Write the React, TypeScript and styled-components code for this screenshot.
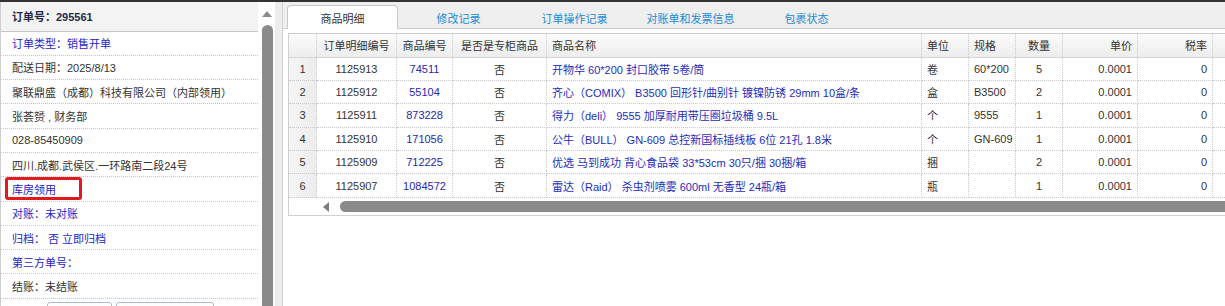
import React from 'react';
import styled, { createGlobalStyle } from 'styled-components';

const GlobalStyle = createGlobalStyle`
  html, body {
    margin: 0;
    padding: 0;
    background: #fff;
    overflow: hidden;
  }
  body {
    font-family: "Liberation Sans", "Noto Sans CJK SC", sans-serif;
    font-size: 11px;
    color: #333;
  }
  * {
    box-sizing: border-box;
  }
`;

const Page = styled.div`
  width: 1225px;
  height: 306px;
  display: flex;
  flex-direction: column;
  overflow: hidden;
`;

const TopStrip = styled.div`
  height: 2px;
  flex: none;
  background: #333;
`;

const Main = styled.div`
  flex: 1;
  display: flex;
  min-height: 0;
`;

/* left: order summary */
const Side = styled.aside`
  width: 258px;
  flex: none;
  border-left: 1px solid #cfcfcf;
  display: flex;
  flex-direction: column;
`;

const SideHead = styled.div`
  height: 29.5px;
  flex: none;
  background: #f3f3f3;
  border-bottom: 1px solid #c6c6c6;
  padding-left: 11px;
  display: flex;
  align-items: center;
  font-weight: bold;
  color: #1f2b48;
`;

const InfoRow = styled.div<{ $blue?: boolean }>`
  height: 24.3px;
  flex: none;
  border-bottom: 1px dotted #c4c4c4;
  padding-left: 11px;
  display: flex;
  align-items: center;
  white-space: pre;
  color: ${(p) => (p.$blue ? '#2424c8' : '#333')};
`;

const Marked = styled.span`
  display: inline-flex;
  align-items: center;
  width: 77px;
  height: 23px;
  margin-left: -7px;
  padding-left: 4px;
  border: 3px solid #e3191d;
  border-radius: 3px;
`;

const ButtonRow = styled.div`
  display: flex;
  gap: 4px;
  padding: 3px 0 0 46px;
`;

const SideButton = styled.button<{ $w: number }>`
  width: ${(p) => p.$w}px;
  height: 22px;
  border: 1px solid #a9bcd2;
  border-radius: 3px;
  background: linear-gradient(#ffffff, #eef2f6);
`;

const VTrack = styled.div`
  width: 17px;
  flex: none;
  display: flex;
  flex-direction: column;
  align-items: flex-start;
  padding: 9px 0 0 4px;
  background: #fff;
`;

const UpArrow = styled.div`
  width: 0;
  height: 0;
  border-left: 5.5px solid transparent;
  border-right: 5.5px solid transparent;
  border-bottom: 6px solid #8a8a8a;
`;

const VThumb = styled.div`
  margin-top: 8px;
  width: 11px;
  flex: 1;
  background: #8a8a8a;
  border-radius: 6px 6px 0 0;
`;

const Splitter = styled.div`
  width: 7px;
  flex: none;
  background: #ededed;
`;

/* right: tabs + grid */
const Content = styled.section`
  flex: 1;
  min-width: 0;
  border-left: 1px solid #d2d2d2;
  display: flex;
  flex-direction: column;
  overflow: hidden;
`;

const TabBar = styled.div`
  height: 27px;
  flex: none;
  background: #efefef;
  border-bottom: 1px solid #cdcdcd;
  display: flex;
  align-items: flex-end;
  gap: 5px;
  padding-left: 4px;
`;

const Tab = styled.div<{ $active?: boolean }>`
  width: 111px;
  height: 24px;
  margin-bottom: -1px;
  display: flex;
  align-items: center;
  justify-content: center;
  color: ${(p) => (p.$active ? '#333' : '#1a8ad4')};
  background: ${(p) => (p.$active ? '#fff' : 'transparent')};
  border: 1px solid ${(p) => (p.$active ? '#c9c9c9' : 'transparent')};
  border-bottom: none;
  border-radius: 4px 4px 0 0;
`;

const Body = styled.div`
  padding: 4px 0 0 5px;
`;

const GridBox = styled.div`
  width: 1010px;
  border: 1px solid #d0d0d0;
`;

const cols = '28px 80px 56px 94px 375px 47px 47px 47px 75px 75px 80px';

const HeadRow = styled.div`
  display: grid;
  grid-template-columns: ${cols};
  height: 23.5px;
  background: linear-gradient(#fbfbfb, #ededed);
  border-bottom: 1px solid #d6d6d6;
`;

const Row = styled.div`
  display: grid;
  grid-template-columns: ${cols};
  height: 23.4px;
`;

type Align = 'left' | 'center' | 'right';

const Cell = styled.div<{ $align?: Align; $color?: string; $num?: boolean }>`
  display: flex;
  align-items: center;
  justify-content: ${(p) =>
    p.$align === 'left' ? 'flex-start' : p.$align === 'right' ? 'flex-end' : 'center'};
  padding: 0 5px;
  border-right: 1px dotted #c8c8c8;
  border-bottom: 1px dotted #c8c8c8;
  overflow: hidden;
  white-space: pre;
  color: ${(p) => p.$color || '#333'};
  background: ${(p) => (p.$num ? 'linear-gradient(to right, #f6f6f6, #ececec)' : 'transparent')};
`;

const HeadCell = styled(Cell)`
  border-bottom: none;
`;

const HScroll = styled.div`
  height: 17.5px;
  display: flex;
  align-items: center;
  gap: 11px;
  padding-left: 34px;
`;

const LeftArrow = styled.div`
  width: 0;
  height: 0;
  border-top: 5px solid transparent;
  border-bottom: 5px solid transparent;
  border-right: 6px solid #7a7a7a;
`;

const HThumb = styled.div`
  flex: 1;
  height: 11px;
  background: #8a8a8a;
  border-radius: 6px 0 0 6px;
`;

const tabs = ['商品明细', '修改记录', '订单操作记录', '对账单和发票信息', '包裹状态'];

const heads: { label: string; align: Align }[] = [
  { label: '', align: 'center' },
  { label: '订单明细编号', align: 'center' },
  { label: '商品编号', align: 'center' },
  { label: '是否是专柜商品', align: 'center' },
  { label: '商品名称', align: 'left' },
  { label: '单位', align: 'left' },
  { label: '规格', align: 'left' },
  { label: '数量', align: 'center' },
  { label: '单价', align: 'right' },
  { label: '税率', align: 'right' },
  { label: '', align: 'left' },
];

const items = [
  ['1125913', '74511', '否', '开物华 60*200 封口胶带 5卷/筒', '卷', '60*200', '5'],
  ['1125912', '55104', '否', '齐心（COMIX） B3500 回形针/曲别针 镀镍防锈 29mm 10盒/条', '盒', 'B3500', '2'],
  ['1125911', '873228', '否', '得力（deli） 9555 加厚耐用带压圈垃圾桶 9.5L', '个', '9555', '1'],
  ['1125910', '171056', '否', '公牛（BULL） GN-609 总控新国标插线板 6位 21孔 1.8米', '个', 'GN-609', '1'],
  ['1125909', '712225', '否', '优选 马到成功 背心食品袋 33*53cm 30只/捆 30捆/箱', '捆', '', '2'],
  ['1125907', '1084572', '否', '雷达（Raid） 杀虫剂喷雾 600ml 无香型 24瓶/箱', '瓶', '', '1'],
];

const App = () => (
  <Page>
    <GlobalStyle />
    <TopStrip />
    <Main>
      <Side>
        <SideHead>订单号：295561</SideHead>
        <InfoRow $blue>订单类型：销售开单</InfoRow>
        <InfoRow>配送日期：2025/8/13</InfoRow>
        <InfoRow>聚联鼎盛（成都）科技有限公司（内部领用）</InfoRow>
        <InfoRow>张荟赟 , 财务部</InfoRow>
        <InfoRow>028-85450909</InfoRow>
        <InfoRow>四川.成都.武侯区.一环路南二段24号</InfoRow>
        <InfoRow $blue>
          <Marked>库房领用</Marked>
        </InfoRow>
        <InfoRow $blue>对账：未对账</InfoRow>
        <InfoRow $blue>归档： 否 立即归档</InfoRow>
        <InfoRow $blue>第三方单号：</InfoRow>
        <InfoRow>结账：未结账</InfoRow>
        <ButtonRow>
          <SideButton $w={65} />
          <SideButton $w={98} />
        </ButtonRow>
      </Side>
      <VTrack>
        <UpArrow />
        <VThumb />
      </VTrack>
      <Splitter />
      <Content>
        <TabBar>
          {tabs.map((t, i) => (
            <Tab key={t} $active={i === 0}>
              {t}
            </Tab>
          ))}
        </TabBar>
        <Body>
          <GridBox>
            <HeadRow>
              {heads.map((h, i) => (
                <HeadCell key={i} $align={h.align}>
                  {h.label}
                </HeadCell>
              ))}
            </HeadRow>
            {items.map((it, i) => (
              <Row key={it[0]}>
                <Cell $num>{i + 1}</Cell>
                <Cell>{it[0]}</Cell>
                <Cell $color="#2727b0">{it[1]}</Cell>
                <Cell>{it[2]}</Cell>
                <Cell $align="left" $color="#1d2dbb">
                  {it[3]}
                </Cell>
                <Cell $align="left">{it[4]}</Cell>
                <Cell $align="left">{it[5]}</Cell>
                <Cell>{it[6]}</Cell>
                <Cell $align="right">0.0001</Cell>
                <Cell $align="right">0</Cell>
                <Cell />
              </Row>
            ))}
            <HScroll>
              <LeftArrow />
              <HThumb />
            </HScroll>
          </GridBox>
        </Body>
      </Content>
    </Main>
  </Page>
);

export default App;
